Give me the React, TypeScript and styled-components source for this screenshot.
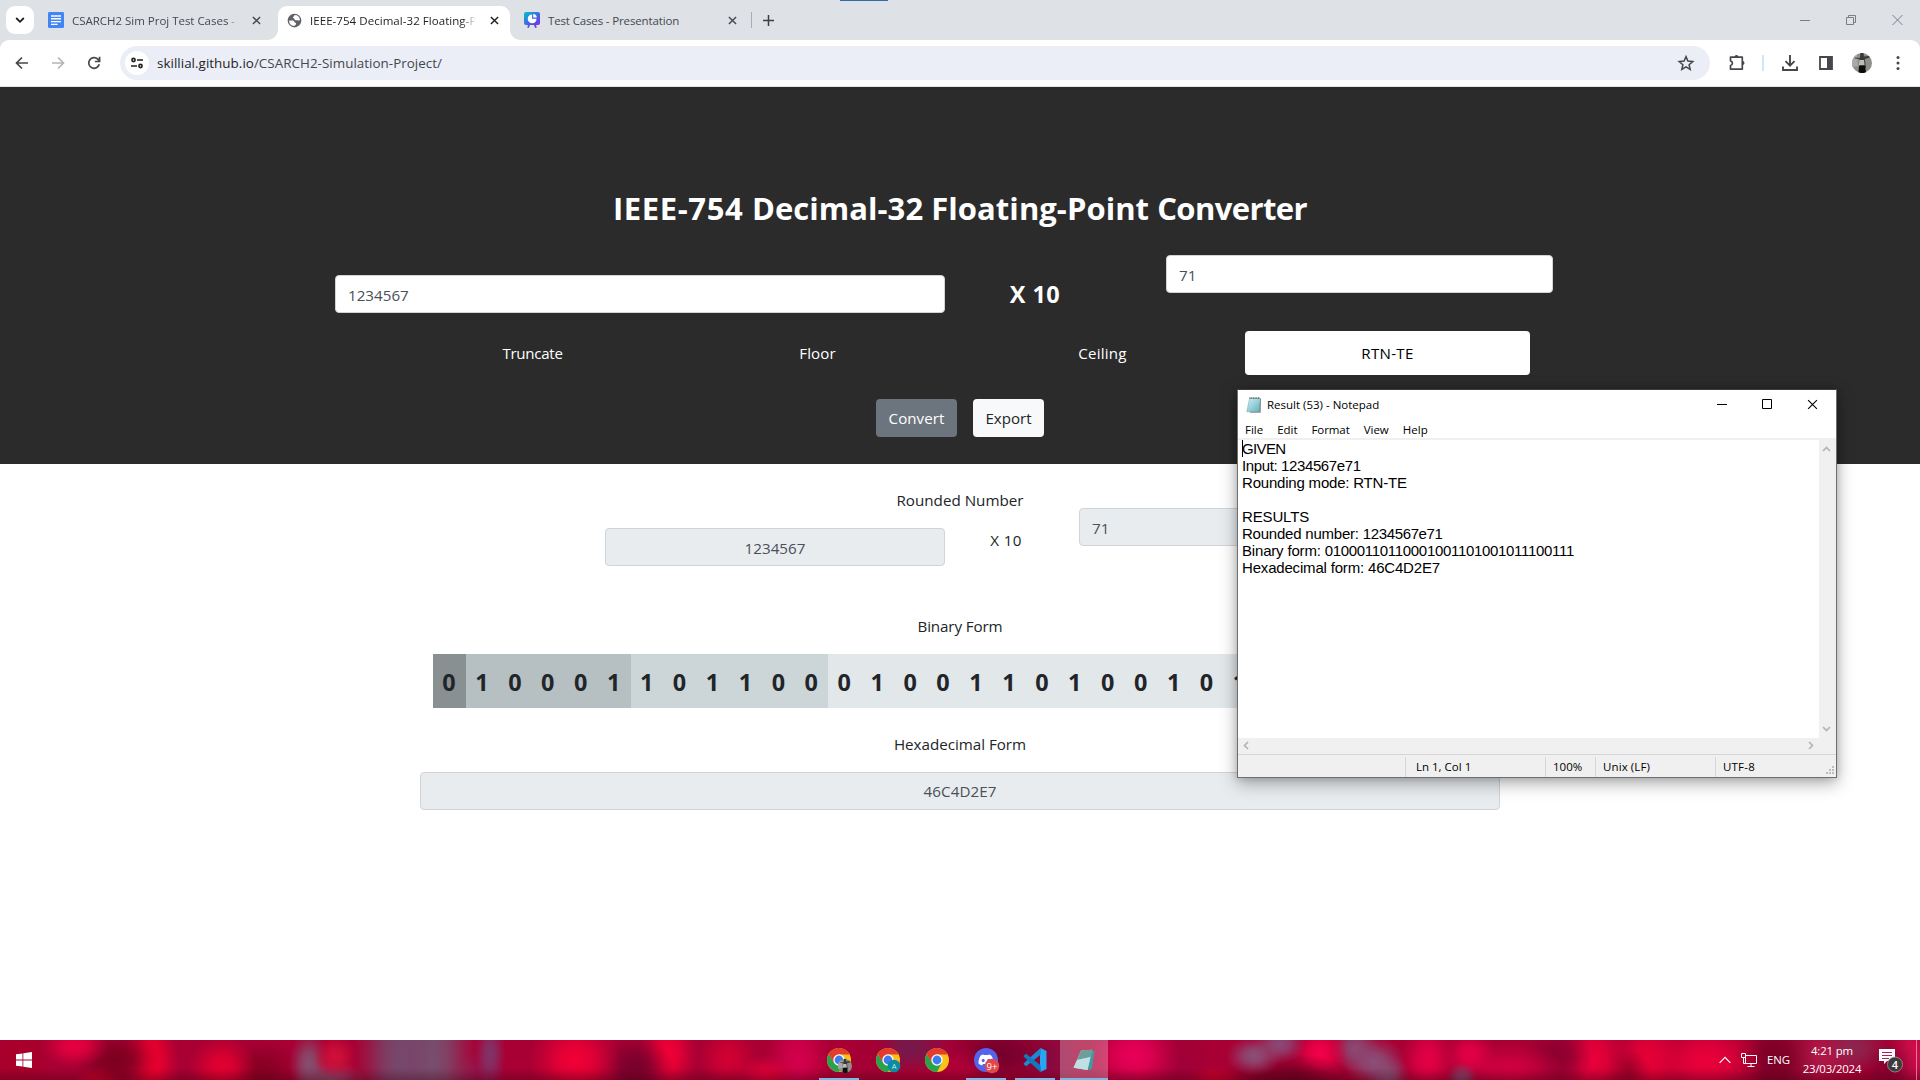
import React from "react";
import styled, { createGlobalStyle } from "styled-components";

const UI = `"Segoe UI", "Open Sans", "Noto Sans", sans-serif`;

const Global = createGlobalStyle`
  *, *::before, *::after { box-sizing: border-box; }
  html, body { margin: 0; padding: 0; background: #fff; }
  body { width: 1920px; height: 1080px; overflow: hidden; font-family: ${UI}; color: #212529; }
  svg { display: block; flex: none; }
`;

const Text = styled.span<{ $ls?: number }>`
  letter-spacing: ${(p) => p.$ls ?? 0}px;
  white-space: pre;
`;

const Screen = styled.div`
  position: relative;
  width: 1920px;
  height: 1080px;
  display: flex;
  flex-direction: column;
  overflow: hidden;
`;

/* ---------- browser chrome ---------- */
const TabStrip = styled.div`
  position: relative;
  flex: none;
  height: 40px;
  background: #dee1e6;
  display: flex;
  align-items: flex-start;
`;
const LoadingMark = styled.div`
  position: absolute;
  left: 840px;
  top: 0;
  width: 48px;
  height: 1px;
  background: #2e6da8;
`;
const TabSearch = styled.div`
  margin: 6px 0 0 6px;
  width: 28px;
  height: 28px;
  border-radius: 9px;
  background: #fff;
  display: grid;
  place-items: center;
`;
const Tab = styled.div<{ $w: number; $active?: boolean }>`
  position: relative;
  width: ${(p) => p.$w}px;
  height: 34px;
  margin-top: 6px;
  padding: 0 11px 6px 9px;
  display: flex;
  align-items: center;
  border-radius: 9px 9px 0 0;
  background: ${(p) => (p.$active ? "#fff" : "transparent")};
  color: ${(p) => (p.$active ? "#1f1f1f" : "#45494f")};
  ${(p) =>
    p.$active &&
    `
    &::before, &::after {
      content: "";
      position: absolute;
      bottom: 0;
      width: 10px;
      height: 10px;
    }
    &::before { left: -10px; background: radial-gradient(circle at 0 0, transparent 9.5px, #fff 10px); }
    &::after { right: -10px; background: radial-gradient(circle at 100% 0, transparent 9.5px, #fff 10px); }
  `}
`;
const TabTitle = styled.div<{ $fade?: number }>`
  flex: 1;
  min-width: 0;
  margin: 2px 14px 0 8px;
  overflow: hidden;
  font-size: 11.5px;
  line-height: 16px;
  ${(p) => p.$fade && `mask-image: linear-gradient(to right, #000 calc(100% - ${p.$fade}px), transparent);`}
`;
const TabDivider = styled.div`
  width: 1px;
  height: 16px;
  margin: 12px 11px 0 3px;
  background: #a9adb3;
`;
const NewTab = styled.div`
  margin-top: 15px;
`;
const WindowButtons = styled.div`
  margin: 14px 17px 0 auto;
  display: flex;
  gap: 35px;
`;

const Toolbar = styled.div`
  flex: none;
  height: 47px;
  background: #dee1e6;
`;
const ToolbarInner = styled.div`
  height: 47px;
  background: #fff;
  border-radius: 9px 9px 0 0;
  border-bottom: 1px solid #e3e5e9;
  display: flex;
  align-items: center;
  padding: 0 13px;
`;
const NavButtons = styled.div`
  display: flex;
  gap: 18px;
`;
const Omnibox = styled.div`
  width: 1590px;
  height: 34px;
  margin-left: 17px;
  padding: 0 15px 0 5px;
  border-radius: 17px;
  background: #ebeef7;
  display: flex;
  align-items: center;
`;
const SiteInfo = styled.div`
  width: 24px;
  height: 24px;
  border-radius: 50%;
  background: #fff;
  display: grid;
  place-items: center;
`;
const Url = styled.div`
  flex: 1;
  margin: 0 0 1px 8px;
  font-size: 13.4px;
  line-height: 20px;
  color: #44474c;
  b { font-weight: 400; color: #1f1f1f; }
`;
const ToolIcons = styled.div`
  flex: 1;
  display: flex;
  align-items: center;
  margin-left: 17px;
`;
const ToolDivider = styled.div`
  width: 2px;
  height: 16px;
  margin: 0 17px 0 15px;
  background: #d3e3fd;
`;
const Spacer = styled.div<{ $w: number }>`
  flex: none;
  width: ${(p) => p.$w}px;
`;

/* ---------- web page ---------- */
const Page = styled.main`
  flex: none;
  height: 953px;
  background: #fff;
`;
const Hero = styled.section`
  height: 377px;
  padding-top: 102px;
  background: #2b2b2b;
  color: #fff;
  display: flex;
  flex-direction: column;
  align-items: center;
`;
const Title = styled.h1`
  margin: 0 0 28px;
  font-size: 31px;
  line-height: 38px;
  font-weight: 700;
`;
const InputRow = styled.div<{ $left: number; $h: number }>`
  width: 100%;
  height: ${(p) => p.$h}px;
  padding-left: ${(p) => p.$left}px;
  display: flex;
  align-items: flex-start;
`;
const Field = styled.div<{ $w: number; $drop?: boolean; $center?: boolean; $disabled?: boolean; $pt?: number }>`
  flex: none;
  width: ${(p) => p.$w}px;
  height: 38px;
  margin-top: ${(p) => (p.$drop ? 20 : 0)}px;
  padding: ${(p) => p.$pt ?? 7}px 12px 0;
  border: 1px solid #ced4da;
  border-radius: 4px;
  background: ${(p) => (p.$disabled ? "#e9ecef" : "#fff")};
  color: #495057;
  text-align: ${(p) => (p.$center ? "center" : "left")};
  font-size: 15.2px;
  line-height: 24px;
`;
const Times = styled.div<{ $w: number; $bold?: boolean }>`
  flex: none;
  width: ${(p) => p.$w}px;
  padding-right: ${(p) => (p.$bold ? 41 : 12)}px;
  margin-top: ${(p) => (p.$bold ? 25 : 20)}px;
  text-align: center;
  font-size: ${(p) => (p.$bold ? 23.5 : 15.2)}px;
  font-weight: ${(p) => (p.$bold ? 700 : 400)};
  line-height: ${(p) => (p.$bold ? 28 : 24)}px;
`;
const Modes = styled.div`
  display: grid;
  grid-template-columns: repeat(4, 285px);
  margin-bottom: 24px;
`;
const Mode = styled.div<{ $on?: boolean }>`
  height: 44px;
  padding-top: 10px;
  border-radius: 4px;
  text-align: center;
  font-size: 15.1px;
  line-height: 24px;
  background: ${(p) => (p.$on ? "#fff" : "transparent")};
  color: ${(p) => (p.$on ? "#000" : "#fff")};
`;
const Actions = styled.div`
  display: flex;
  gap: 16px;
`;
const Action = styled.div<{ $w: number; $primary?: boolean }>`
  width: ${(p) => p.$w}px;
  height: 38px;
  padding-top: 7px;
  border-radius: 4px;
  text-align: center;
  font-size: 15.1px;
  line-height: 24px;
  background: ${(p) => (p.$primary ? "#6c757d" : "#f8f9fa")};
  color: ${(p) => (p.$primary ? "#fff" : "#212529")};
`;
const Results = styled.section`
  padding-top: 28px;
  display: flex;
  flex-direction: column;
  align-items: center;
`;
const Label = styled.div<{ $mt?: number; $mb?: number }>`
  margin: ${(p) => p.$mt ?? 0}px 0 ${(p) => p.$mb ?? 0}px;
  font-size: 15.2px;
  line-height: 16px;
`;
const Bits = styled.div`
  display: flex;
`;
const Bit = styled.div<{ $bg: string }>`
  width: 32.94px;
  height: 54px;
  padding: 14px 1px 0 0;
  text-align: center;
  font-size: 23.4px;
  font-weight: 700;
  line-height: 28px;
  background: ${(p) => p.$bg};
`;

/* ---------- notepad ---------- */
const Notepad = styled.div`
  position: absolute;
  left: 1237px;
  top: 389px;
  width: 600px;
  height: 389px;
  border: 1px solid #6b6f70;
  border-top-color: #3c3c3c;
  background: #fff;
  color: #000;
  box-shadow: 0 5px 16px rgba(0, 0, 0, 0.34), 0 0 7px rgba(0, 0, 0, 0.14);
  display: flex;
  flex-direction: column;
  font-size: 11.5px;
`;
const NpTitle = styled.div`
  height: 29px;
  display: flex;
  align-items: center;
  padding: 0 18px 0 8px;
  line-height: 16px;
`;
const NpName = styled.div`
  flex: 1;
  padding-left: 5px;
`;
const NpButtons = styled.div`
  display: flex;
  gap: 35px;
`;
const NpMenu = styled.div`
  height: 21px;
  padding: 3px 0 0 7px;
  display: flex;
  gap: 14px;
  line-height: 16px;
  border-bottom: 2px solid #f0f0f0;
`;
const NpBody = styled.div`
  display: grid;
  grid-template-columns: 1fr 17px;
  grid-template-rows: 298px 16px;
  background: #f0f0f0;
`;
const NpText = styled.div`
  background: #fff;
  padding: 0 0 0 4px;
  font-family: "Liberation Sans", Arial, sans-serif;
  font-size: 15px;
  line-height: 17px;
`;
const Caret = styled.span`
  display: inline-block;
  width: 1px;
  height: 17px;
  margin-right: -1px;
  background: #000;
  vertical-align: top;
`;
const Line = styled.div`
  height: 17px;
`;
const VScroll = styled.div`
  display: flex;
  flex-direction: column;
  justify-content: space-between;
  align-items: center;
  padding: 5px 2px 5px 0;
`;
const HScroll = styled.div`
  display: flex;
  justify-content: space-between;
  align-items: center;
  padding: 0 4px 2px 4px;
`;
const NpStatus = styled.div`
  flex: 1;
  border-top: 1px solid #d5d5d5;
  background: #f0f0f0;
  display: flex;
  position: relative;
  line-height: 16px;
`;
const StatusCell = styled.div<{ $w?: number; $pl: number }>`
  ${(p) => (p.$w ? `width: ${p.$w}px;` : "flex: 1;")}
  margin-top: 2px;
  padding: 2px 0 0 ${(p) => p.$pl}px;
  border-left: 1px solid #d7d7d7;
  &:first-child { border-left: 0; }
`;
const Grip = styled.div`
  position: absolute;
  right: 1px;
  bottom: 2px;
`;

/* ---------- taskbar ---------- */
/* wallpaper blobs seen through the taskbar: x, y, radius x, radius y, colour */
const blobs: [number, number, number, number, string][] = [
  [335, 17, 22, 24, "#d01038"],
  [400, 20, 46, 160, "#75496c"], [432, 20, 46, 160, "#785070"],
  [309, 24, 20, 34, "#84506e"], [330, 40, 36, 20, "#8a4a70"],
  [490, 14, 16, 34, "#80356a"], [478, 36, 30, 24, "#96104a"],
  [75, 6, 34, 22, "#e80040"], [115, 20, 44, 30, "#7c001e"], [152, 24, 28, 60, "#f0002e"],
  [100, 40, 26, 14, "#e0002c"], [20, 20, 40, 40, "#a80028"], [222, 28, 34, 34, "#e40030"], [262, 30, 40, 30, "#860022"],
  [575, 20, 46, 46, "#f20036"], [635, 28, 38, 34, "#78002c"], [668, 14, 30, 44, "#f20036"],
  [728, 18, 30, 34, "#d20032"], [765, 36, 30, 22, "#e00038"], [798, 20, 34, 50, "#d4004c"],
  [870, 20, 30, 40, "#a40034"], [910, 8, 44, 26, "#741a4c"], [955, 30, 34, 26, "#b00038"], [1000, 14, 60, 34, "#74002c"], [1052, 20, 34, 40, "#8a0a40"],
  [1134, 16, 46, 40, "#ea0058"], [1182, 24, 30, 50, "#a00038"], [1210, 40, 34, 14, "#d0002c"],
  [1254, 16, 28, 20, "#8a5078"], [1280, 4, 26, 20, "#8a4a78"], [1290, 40, 70, 26, "#700022"],
  [1320, 14, 28, 32, "#f40048"], [1355, 8, 24, 24, "#8a4a74"], [1374, 22, 32, 26, "#895078"], [1388, 38, 22, 24, "#854a70"],
  [1428, 20, 28, 40, "#e40044"], [1462, 38, 16, 16, "#844068"], [1470, 14, 26, 24, "#e40044"],
  [1508, 30, 56, 28, "#d20040"], [1558, 16, 34, 34, "#8e0030"], [1594, 20, 36, 50, "#ea003a"], [1622, 32, 30, 24, "#980028"],
  [1648, 20, 36, 50, "#e80036"], [1706, 22, 60, 44, "#ec003a"], [1775, 20, 44, 46, "#780026"],
  [1815, 16, 40, 34, "#b01848"], [1850, 8, 40, 26, "#8a2850"], [1888, 28, 34, 34, "#8a0030"], [1910, 18, 24, 40, "#d81050"],
];
const wallpaper = blobs
  .map(([x, y, rx, ry, c]) => `radial-gradient(ellipse ${rx}px ${ry}px at ${x}px ${y}px, ${c}, ${c}c8 35%, ${c}50 70%, ${c}00 100%)`)
  .join(", ");

const Taskbar = styled.div`
  position: relative;
  flex: none;
  height: 40px;
  background: linear-gradient(to bottom, transparent 70%, rgba(50, 0, 10, 0.3)), ${wallpaper}, #a80034;
  display: flex;
  color: #fff;
`;
const Start = styled.div`
  width: 48px;
  padding: 12px 0 0 16px;
`;
const Apps = styled.div`
  margin-left: 767px;
  display: flex;
  gap: 1px;
`;
const AppSlot = styled.div<{ $on?: boolean; $bar?: boolean }>`
  position: relative;
  width: 48px;
  height: 40px;
  display: grid;
  place-items: center;
  background: ${(p) => (p.$on ? "rgba(255,255,255,0.27)" : "transparent")};
  &::after {
    content: "";
    position: absolute;
    left: ${(p) => (p.$on ? 0 : 4)}px;
    right: ${(p) => (p.$on ? 0 : 4)}px;
    bottom: 0;
    height: 2px;
    background: ${(p) => (p.$bar ? "#82b4e4" : "transparent")};
  }
`;
const Tray = styled.div`
  margin-left: auto;
  display: flex;
  align-items: center;
  font-size: 11.4px;
  line-height: 18px;
`;
const Lang = styled.div`
  margin: 0 12px 0 10px;
`;
const Clock = styled.div`
  width: 60px;
  text-align: center;
`;
const Notif = styled.div`
  margin: 0 15px 0 17px;
`;
const ShowDesktop = styled.div`
  width: 4px;
  height: 40px;
  border-left: 1px solid rgba(255, 255, 255, 0.45);
`;

/* ---------- icons ---------- */
const X = ({ s, c, w, sw = 1.6 }: { s: number; c: string; w?: number; sw?: number }) => (
  <svg width={w ?? s} height={w ?? s} viewBox="0 0 10 10" stroke={c} strokeWidth={sw} fill="none">
    <path d="M1 1l8 8M9 1l-8 8" />
  </svg>
);
const Chev = ({ r = 0 }: { r?: number }) => (
  <svg width="9" height="9" viewBox="0 0 9 9">
    <path d="M1 6l3.500-3.500L8 6" fill="none" stroke="#b4b4b4" strokeWidth="1.700" transform={`rotate(${r} 4.500 4.500)`} />
  </svg>
);
const Docs = () => (
  <svg width="16" height="16" viewBox="0 0 16 16">
    <rect width="16" height="16" rx="1.2" fill="#4285f4" />
    <path d="M3 4h10M3 6.800h10M3 9.600h10M3 12.400h6.500" stroke="#fff" strokeWidth="1.4" />
  </svg>
);
const Globe = () => (
  <svg width="15" height="15" viewBox="0 0 24 24">
    <path fill="#5f6368" fillRule="evenodd" d="M12 1a11 11 0 1 0 0 22 11 11 0 0 0 0-22zM3.300 12.500c3-.6 6.400-.7 7.700.4 1.200 1 .7 2.300 2.200 2.700 1.300.4 1.900 1.200 1 2.600-.6 1-2.400 1.900-2.800 2.600A8.800 8.800 0 0 1 3.300 12.500zM20.700 11c-1.100 1.200-2.500 1.300-3.900.7-1.600-.7-2.600.2-3.900-.6-1.300-.9-.7-2.500-2.300-2.900-1.400-.4-1.500-1.700-.3-2.400 1.100-.6 1.500-1.500 1.700-2.600a8.800 8.800 0 0 1 8.700 7.800z" />
  </svg>
);
const Slides = () => (
  <svg width="16" height="16" viewBox="0 0 16 16">
    <defs>
      <linearGradient id="cv" x1="0" y1="0" x2=".8" y2="1">
        <stop offset="0" stopColor="#00c4cc" />
        <stop offset=".5" stopColor="#3a6fe0" />
        <stop offset="1" stopColor="#7d2ae8" />
      </linearGradient>
    </defs>
    <path fill="url(#cv)" d="M2 0h12a2 2 0 0 1 2 2v9a2 2 0 0 1-2 2h-2l.8 2.600-1.600.4-1.200-3H6l-1.200 3-1.600-.4L4 13H2a2 2 0 0 1-2-2V2a2 2 0 0 1 2-2z" />
    <path fill="#fff" d="M8 2.500v4.200h4.500A4.400 4.400 0 1 1 8 2.500z" />
    <path fill="#fff" d="M9.200 2a4 4 0 0 1 3.600 3.500H9.200z" />
  </svg>
);
const Chrome = () => (
  <>
    <circle cx="12" cy="12" r="12" fill="#fbc116" />
    <path d="M1.610 6A12 12 0 0 0 12 24l4.900-9.300L12 12 7 14.500z" fill="#2aa24c" />
    <path d="M1.610 6L7 14.800 12 12V6.400h10.600A12 12 0 0 0 1.610 6z" fill="#e33b2e" />
    <circle cx="12" cy="12" r="5.700" fill="#fff" />
    <circle cx="12" cy="12" r="4.400" fill="#3b7ded" />
  </>
);
const Avatar = ({ cx, cy, r }: { cx: number; cy: number; r: number }) => (
  <g transform={`translate(${cx} ${cy}) scale(${r / 10})`}>
    <circle r="10" fill="#8f8f88" />
    <path d="M-10 0a10 10 0 0 1 5-8.600L-4 3l-5.500 1z" fill="#a9aaa6" />
    <path d="M-7-5.500l5 .5.200-3.500a1.800 1.800 0 0 1 3.600 0l0 2 5-.5 1 1.500-5 1.500.6 4 .6 5h-6.500l.5-5-.6-4-4.600-.5z" fill="#3a3a3b" />
    <path d="M-2.500-3h4.500l.6 5h-5.600z" fill="#b9bcc0" />
    <path d="M-3 3h6l1 6.300a10 10 0 0 1-7.500 0z" fill="#0b0d0c" />
  </g>
);
const Note = ({ s }: { s: number }) => (
  <svg width={s} height={s} viewBox="0 0 16 16">
    <defs>
      <linearGradient id="np" x1="0" y1="0" x2="1" y2="1">
        <stop offset="0" stopColor="#d3eff2" />
        <stop offset="1" stopColor="#5fb2c0" />
      </linearGradient>
    </defs>
    <path d="M4 1.500h11L14.800 15.800H4z" fill="#8a8f8c" />
    <path d="M3.500 1.500h10.800L12.900 14.800H.8z" fill="url(#np)" stroke="#6fa6ae" strokeWidth=".5" />
    <path d="M3.500 1h10.500" stroke="#4c6468" strokeWidth="1.300" strokeDasharray="1 .7" />
  </svg>
);

const BITS = "01000110110001001101001011100111";
const bitColor = (i: number) => (i < 1 ? "#889092" : i < 6 ? "#b6bfc1" : i < 12 ? "#ccd5d8" : "#e2e7ea");

export default function App() {
  return (
    <Screen>
      <Global />
      <TabStrip>
        <LoadingMark />
        <TabSearch>
          <svg width="10" height="8" viewBox="0 0 10 8" fill="none" stroke="#1f1f1f" strokeWidth="1.800"><path d="M1.200 2l3.800 3.800L8.800 2" /></svg>
        </TabSearch>
        <Spacer $w={5} />
        <Tab $w={233}>
          <Docs />
          <TabTitle $fade={10}><Text $ls={-0.02}>CSARCH2 Sim Proj Test Cases -</Text></TabTitle>
          <X s={9} c="#45494f" />
        </Tab>
        <Spacer $w={6} />
        <Tab $w={232} $active>
          <Globe />
          <TabTitle $fade={14}><Text $ls={0.05}>IEEE-754 Decimal-32 Floating-P</Text></TabTitle>
          <X s={9} c="#1f1f1f" />
        </Tab>
        <Spacer $w={5} />
        <Tab $w={233}>
          <Slides />
          <TabTitle><Text $ls={-0.14}>Test Cases - Presentation</Text></TabTitle>
          <X s={9} c="#45494f" />
        </Tab>
        <TabDivider />
        <NewTab>
          <svg width="11" height="11" viewBox="0 0 11 11" stroke="#3c4043" strokeWidth="1.500"><path d="M5.500 0v11M0 5.500h11" /></svg>
        </NewTab>
        <WindowButtons>
          <svg width="11" height="12" viewBox="0 0 11 12" stroke="#7b7f84"><path d="M0 6.500h10" /></svg>
          <svg width="11" height="12" viewBox="0 0 11 12" stroke="#7b7f84" fill="none"><path d="M.5 3.500h7v7h-7zM2.500 3.500v-2h7v7h-2" /></svg>
          <svg width="11" height="12" viewBox="0 0 11 12" stroke="#7b7f84" fill="none"><path d="M.5 1l10 10M10.500 1l-10 10" /></svg>
        </WindowButtons>
      </TabStrip>

      <Toolbar>
        <ToolbarInner>
          <NavButtons>
            <svg width="18" height="18" viewBox="0 0 18 18" fill="none" stroke="#44474c" strokeWidth="1.700"><path d="M15 9H4M9 3.500L3.500 9 9 14.500" /></svg>
            <svg width="18" height="18" viewBox="0 0 18 18" fill="none" stroke="#b3b5b8" strokeWidth="1.700"><path d="M3 9h11M9 3.500L14.500 9 9 14.500" /></svg>
            <svg width="18" height="18" viewBox="0 0 18 18" fill="none" stroke="#44474c" strokeWidth="1.700"><path d="M14.200 10.200A5.300 5.300 0 1 1 12.800 5.200L14.400 7M14.600 2.800v4.700H9.900" /></svg>
          </NavButtons>
          <Omnibox>
            <SiteInfo>
              <svg width="14" height="12" viewBox="0 0 14 12" fill="none" stroke="#1f1f1f" strokeWidth="1.600"><circle cx="3.500" cy="3" r="1.600" /><path d="M7 3h6M1 9h6" /><circle cx="10.500" cy="9" r="1.600" /></svg>
            </SiteInfo>
            <Url><Text $ls={0.035}><b>skillial.github.io</b>/CSARCH2-Simulation-Project/</Text></Url>
            <svg width="18" height="18" viewBox="0 0 18 18" fill="none" stroke="#44474c" strokeWidth="1.500"><path d="M9 2.600l1.900 4.500 4.900.4-3.700 3.200 1.100 4.800L9 12.900l-4.200 2.600 1.100-4.800L2.200 7.500l4.900-.4z" /></svg>
          </Omnibox>
          <ToolIcons>
            <svg width="20" height="20" viewBox="0 0 20 20" fill="none" stroke="#44474c" strokeWidth="1.700"><path d="M3.500 4.200h11.800v11.900H3.500v-3.600a2.400 2.400 0 0 0 0-4.700z" strokeLinejoin="round" /><path d="M7.500 4a2 2 0 0 1 4 0zM15.500 8a2 2 0 0 1 0 4z" fill="#44474c" stroke="none" /></svg>
            <ToolDivider />
            <svg width="18" height="18" viewBox="0 0 18 18" fill="none" stroke="#44474c" strokeWidth="1.900"><path d="M9 1v10.500M4.500 7.200L9 11.700l4.500-4.500M2 12.500V16h14v-3.500" /></svg>
            <Spacer $w={18} />
            <svg width="18" height="18" viewBox="0 0 18 18"><path d="M3 3h12v12H3z" fill="none" stroke="#44474c" strokeWidth="1.800" /><path d="M10 3h5v12h-5z" fill="#44474c" /></svg>
            <Spacer $w={17} />
            <svg width="20" height="20" viewBox="0 0 20 20"><Avatar cx={10} cy={10} r={10} /></svg>
            <Spacer $w={22} />
            <svg width="8" height="18" viewBox="0 0 8 18" fill="#44474c"><circle cx="4" cy="3.500" r="1.500" /><circle cx="4" cy="9" r="1.500" /><circle cx="4" cy="14.500" r="1.500" /></svg>
          </ToolIcons>
        </ToolbarInner>
      </Toolbar>

      <Page>
        <Hero>
          <Title>
            <Text $ls={0.6}>IEEE-754 </Text>
            <Text $ls={0.05}>Decimal-32 Floating-Point </Text>
            <Text $ls={-0.6}>Converter</Text>
          </Title>
          <InputRow $left={335} $h={76}>
            <Field $w={610} $drop><Text>1234567</Text></Field>
            <Times $w={221} $bold><Text $ls={0.4}>X 10</Text></Times>
            <Field $w={387}><Text>71</Text></Field>
          </InputRow>
          <Modes>
            <Mode><Text $ls={-0.28}>Truncate</Text></Mode>
            <Mode><Text $ls={0.1}>Floor</Text></Mode>
            <Mode><Text $ls={0.2}>Ceiling</Text></Mode>
            <Mode $on><Text $ls={0.3}>RTN-TE</Text></Mode>
          </Modes>
          <Actions>
            <Action $w={81} $primary><Text $ls={0.05}>Convert</Text></Action>
            <Action $w={71}><Text>Export</Text></Action>
          </Actions>
        </Hero>
        <Results>
          <Label><Text>Rounded Number</Text></Label>
          <InputRow $left={605} $h={58}>
            <Field $w={340} $drop $center $disabled><Text>1234567</Text></Field>
            <Times $w={134}><Text $ls={0.4}>X 10</Text></Times>
            <Field $w={236} $disabled><Text>71</Text></Field>
          </InputRow>
          <Label $mt={52} $mb={20}><Text $ls={-0.12}>Binary Form</Text></Label>
          <Bits>
            {BITS.split("").map((b, i) => <Bit key={i} $bg={bitColor(i)}>{b}</Bit>)}
          </Bits>
          <Label $mt={28} $mb={20}><Text $ls={-0.03}>Hexadecimal Form</Text></Label>
          <Field $w={1080} $center $disabled $pt={6}><Text $ls={0.05}>46C4D2E7</Text></Field>
        </Results>
      </Page>

      <Taskbar>
        <Start>
          <svg width="16" height="16" viewBox="0 0 16 16" fill="#fff"><path d="M0 2.300l6.500-.9v6.200H0zM7.300 1.200L16 0v7.600H7.300zM0 8.400h6.500v6.200L0 13.700zM7.300 8.400H16V16l-8.700-1.200z" /></svg>
        </Start>
        <Apps>
          <AppSlot $bar><svg width="24" height="24" viewBox="0 0 24 24" overflow="visible"><Chrome /><Avatar cx={18} cy={18} r={7} /></svg></AppSlot>
          <AppSlot>
            <svg width="24" height="24" viewBox="0 0 24 24" overflow="visible"><Chrome /><circle cx="18" cy="18" r="6.300" fill="#0a8da0" /><text x="18" y="21" fontSize="7.500" fill="#c8e9ee" textAnchor="middle">A</text></svg>
          </AppSlot>
          <AppSlot><svg width="24" height="24" viewBox="0 0 24 24"><Chrome /></svg></AppSlot>
          <AppSlot $bar>
            <svg width="26" height="26" viewBox="-1 0 26 26" overflow="visible">
              <circle cx="12" cy="13" r="12" fill="#5562ea" />
              <path fill="#fff" d="M8.500 7.500l2 .6h3l2-.6c2.500.8 4 4.500 4 9-1.200 1.200-2.500 1.800-3.700 2l-.9-1.600H9l-.9 1.600c-1.300-.2-2.500-.9-3.600-2 0-4.500 1.500-8.200 4-9z" />
              <ellipse cx="9.200" cy="13.500" rx="1.500" ry="1.700" fill="#5562ea" />
              <ellipse cx="14.800" cy="13.500" rx="1.500" ry="1.700" fill="#5562ea" />
              <circle cx="18" cy="19" r="7.300" fill="#e2474b" />
              <text x="18" y="22.500" fontSize="9.500" fill="#fff" textAnchor="middle">9+</text>
            </svg>
          </AppSlot>
          <AppSlot $bar>
            <svg width="24" height="24" viewBox="0 0 24 24">
              <path d="M17.500 0L23.500 3v18l-6 3-.5-6V6z" fill="#2aa5f0" />
              <path d="M17.500 0v6.800L3.200 18.200 .8 16.600V15.300z" fill="#1b8ad4" />
              <path d="M17.500 24v-6.800L3.200 5.800 .8 7.400v1.300z" fill="#1279c0" />
            </svg>
          </AppSlot>
          <AppSlot $bar $on>
            <svg width="24" height="24" viewBox="0 0 24 24">
              <path d="M19 2l3.500 1.200-2.700 18-4.300.8z" fill="#3f9aa5" />
              <path d="M9 2.500L20 1.800 15.500 22 1.500 19.800z" fill="#a9d3d4" />
              <path d="M9 2.500L20 1.800 18.500 9 5.200 12z" fill="#6f9d98" />
              <path d="M5.200 12l13.300-3-3 13-14-2.200z" fill="#bfe0e2" />
            </svg>
          </AppSlot>
        </Apps>
        <Tray>
          <svg width="12" height="8" viewBox="0 0 12 8" fill="none" stroke="#fff" strokeWidth="1.200"><path d="M.6 6.800L6 1.400l5.400 5.400" /></svg>
          <Spacer $w={10} />
          <svg width="16" height="14" viewBox="0 0 16 14" fill="none" stroke="#fff"><path d="M4.500 2.500h11v8h-11zM10 10.500v3M6.500 13.500h7" /><path d="M.5.500h4v4h-4zM2.500 4.500v6h2" /></svg>
          <Lang><Text $ls={-0.06}>ENG</Text></Lang>
          <Clock><div><Text $ls={-0.14}>4:21 pm</Text></div><div><Text $ls={-0.2}>23/03/2024</Text></div></Clock>
          <Notif>
            <svg width="22" height="22" viewBox="0 0 22 22" overflow="visible">
              <path d="M0 0h16v12H8l-3 3v-3H0z" fill="#fff" />
              <path d="M3 3.500h10M3 6.500h10M3 9.500h7" stroke="#b02050" />
              <circle cx="16" cy="15.500" r="7.500" fill="#3d3a3c" stroke="#a09a9c" strokeWidth=".8" />
              <text x="16" y="19.500" fontSize="11" fontWeight="600" fill="#fff" textAnchor="middle">4</text>
            </svg>
          </Notif>
          <ShowDesktop />
        </Tray>
      </Taskbar>

      <Notepad>
        <NpTitle>
          <Note s={16} />
          <NpName><Text>Result (53) - Notepad</Text></NpName>
          <NpButtons>
            <svg width="10" height="10" viewBox="0 0 10 10" stroke="#000"><path d="M0 5.500h10" /></svg>
            <svg width="10" height="10" viewBox="0 0 10 10" stroke="#000" fill="none"><path d="M.5.500h9v9h-9z" /></svg>
            <X s={10} c="#000" w={11} sw={1} />
          </NpButtons>
        </NpTitle>
        <NpMenu>
          <Text>File</Text><Text $ls={-0.05}>Edit</Text><Text $ls={-0.08}>Format</Text><Text>View</Text><Text $ls={0}>Help</Text>
        </NpMenu>
        <NpBody>
          <NpText>
            <Line><Caret /><Text $ls={-0.65}>GIVEN</Text></Line>
            <Line><Text $ls={-0.38}>Input: 1234567e71</Text></Line>
            <Line><Text $ls={-0.2}>Rounding mode: RTN-TE</Text></Line>
            <Line />
            <Line><Text $ls={-0.15}>RESULTS</Text></Line>
            <Line><Text $ls={-0.22}>Rounded number: </Text><Text $ls={-0.36}>1234567e71</Text></Line>
            <Line><Text $ls={-0.18}>Binary form: </Text><Text $ls={-0.31}>01000110110001001101001011100111</Text></Line>
            <Line><Text $ls={-0.18}>Hexadecimal form: 46C4D2E7</Text></Line>
          </NpText>
          <VScroll><Chev /><Chev r={180} /></VScroll>
          <HScroll><Chev r={-90} /><Chev r={90} /></HScroll>
        </NpBody>
        <NpStatus>
          <StatusCell $w={167} $pl={0} />
          <StatusCell $w={140} $pl={10}><Text>Ln 1, Col 1</Text></StatusCell>
          <StatusCell $w={50} $pl={7}><Text>100%</Text></StatusCell>
          <StatusCell $w={120} $pl={7}><Text $ls={0.1}>Unix (LF)</Text></StatusCell>
          <StatusCell $pl={7}><Text $ls={0.2}>UTF-8</Text></StatusCell>
          <Grip>
            <svg width="9" height="9" viewBox="0 0 9 9" fill="#bdbdbd"><path d="M6 0h2v2H6zM6 3h2v2H6zM6 6h2v2H6zM3 3h2v2H3zM3 6h2v2H3zM0 6h2v2H0z" /></svg>
          </Grip>
        </NpStatus>
      </Notepad>
    </Screen>
  );
}
